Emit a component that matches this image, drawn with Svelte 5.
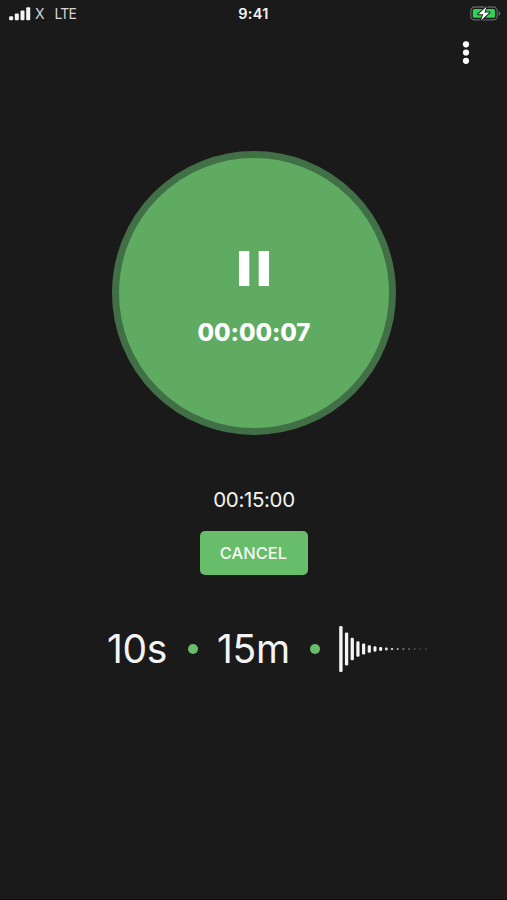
<script lang="ts">
    type WaveBar = {
        height: number,
        width: number,
        opacity: number
    };

    let running = true;
    const elapsed = "00:00:07";
    const total = "00:15:00";
    const interval = "10s";
    const duration = "15m";

    const signal = [4, 6.8, 9.8, 13];

    const heights = [46, 33, 22.5, 15.5, 11, 7.6, 5.4, 4, 2.8, 2.2, 1.8, 1.5, 1.3, 1.2, 1.2, 1.2];
    const widths = [3.4, 3.3, 3.3, 3.2, 3.2, 3.2, 3, 3, 2.8, 2.4, 2, 2, 1.8, 1.6, 1.4, 1.4];
    const opacities = [1, 1, 1, 1, 1, 1, 1, 1, 0.9, 0.8, 0.65, 0.55, 0.45, 0.4, 0.4, 0.4];

    const wave: WaveBar[] = heights.map((height, i) => ({
        height,
        width: widths[i],
        opacity: opacities[i]
    }));

    function toggle() {
        running = !running;
    }
</script>

<div class="screen">
    <header class="status_bar">
        <div class="carrier">
            <svg width="22" height="14" viewBox="0 0 22 14">
                {#each signal as height, i}
                    <rect x={0.1 + i * 5.7} y={13.2 - height} width="4" height={height} rx="1" fill="#f4f4f4" />
                {/each}
            </svg>
            <span class="carrier_name">X</span>
            <span class="network">LTE</span>
        </div>
        <div class="clock">9:41</div>
        <div class="battery">
            <svg width="32" height="18" viewBox="0 0 32 18">
                <rect x="1.8" y="2" width="26.4" height="12.8" rx="3.8" fill="#1a1a1a" stroke="#626262" stroke-width="1.3" />
                <path d="M29.6 6.2c1.3.4 1.8 1.2 1.8 2.3s-.5 1.9-1.8 2.3z" fill="#626262" />
                <rect x="3.8" y="4" width="22.2" height="8.8" rx="1.6" fill="#30d158" />
                <path d="M17.7 1.4 9.3 9.3h5l-2.4 6.2 8.5-8h-5z" fill="#fff" stroke="#1a1a1a" stroke-width="2" stroke-linejoin="round" paint-order="stroke" />
            </svg>
        </div>
    </header>

    <div class="toolbar">
        <button class="menu" aria-label="Menu">
            <svg width="8" height="24" viewBox="0 0 8 24" fill="#fff">
                <circle cx="4" cy="3.3" r="3.1" />
                <circle cx="4" cy="11.5" r="3.1" />
                <circle cx="4" cy="19.8" r="3.1" />
            </svg>
        </button>
    </div>

    <button class="timer" on:click={toggle}>
        <svg width="30" height="35" viewBox="0 0 30 35" fill="#fff">
            {#if running}
                <rect x="0" y="0" width="10.3" height="35" />
                <rect x="19.7" y="0" width="10.3" height="35" />
            {:else}
                <path d="M2 0 30 17.5 2 35z" />
            {/if}
        </svg>
        <span class="elapsed">{elapsed}</span>
    </button>

    <div class="total">{total}</div>
    <button class="cancel">CANCEL</button>

    <div class="summary">
        <span class="value">{interval}</span>
        <span class="dot"></span>
        <span class="value duration">{duration}</span>
        <span class="dot last"></span>
        <svg class="wave" width="90" height="46" viewBox="0 0 90 46">
            {#each wave as bar, i}
                <rect
                    x={1.9 + i * 5.68 - bar.width / 2}
                    y={23 - bar.height / 2}
                    width={bar.width}
                    height={bar.height}
                    rx={Math.min(bar.width, bar.height) / 2.6}
                    fill="#f4f4f4"
                    opacity={bar.opacity}
                />
            {/each}
        </svg>
    </div>
</div>

<style>
    :global(body) {
        background-color: #1a1a1a;
    }

    .screen {
        display: flex;
        flex-direction: column;
        align-items: center;
        box-sizing: border-box;
        height: 900px;
        background-color: #1a1a1a;
        border-bottom: 1px solid #120c10;
        color: #f4f4f4;
        font-family: Inter, "Liberation Sans", sans-serif;
        overflow: hidden;
    }

    button {
        border: none;
        padding: 0;
        color: inherit;
        font-family: inherit;
    }

    .status_bar {
        display: grid;
        grid-template-columns: 1fr auto 1fr;
        align-items: center;
        box-sizing: border-box;
        width: 100%;
        height: 28px;
        padding: 0 6px 0 9px;
    }

    .carrier {
        display: flex;
        align-items: center;
        font-size: 14px;
        line-height: 28px;
        color: #d6d6d6;
    }

    .carrier_name {
        margin-left: 4px;
    }

    .network {
        margin-left: 10px;
        letter-spacing: -0.8px;
    }

    .clock {
        margin-right: 3px;
        font-size: 14.5px;
        font-weight: 600;
        line-height: 28px;
        letter-spacing: 0.3px;
    }

    .battery {
        display: flex;
        justify-content: flex-end;
    }

    .toolbar {
        display: flex;
        justify-content: flex-end;
        width: 100%;
        height: 123px;
    }

    .menu {
        display: flex;
        justify-content: center;
        width: 24px;
        height: 50px;
        margin-right: 29px;
        padding-top: 13px;
        background: none;
    }

    .timer {
        display: flex;
        flex-direction: column;
        align-items: center;
        box-sizing: border-box;
        width: 284px;
        height: 284px;
        margin-left: 1px;
        padding-top: 93px;
        border: 7px solid #427046;
        border-radius: 50%;
        background-color: #5fab62;
        color: #fff;
    }

    .elapsed {
        margin-top: 32px;
        font-size: 24px;
        font-weight: 800;
        line-height: 30px;
        letter-spacing: -0.1px;
    }

    .total {
        margin-top: 52px;
        margin-left: 1px;
        font-size: 20.5px;
        line-height: 26px;
        letter-spacing: -0.35px;
    }

    .cancel {
        width: 108px;
        height: 44px;
        margin-top: 18px;
        border-radius: 5px;
        background-color: #68bd6b;
        color: #f4f8f4;
        font-size: 16.5px;
        font-weight: 500;
    }

    .summary {
        display: flex;
        align-items: center;
        align-self: flex-start;
        height: 60px;
        margin: 44px 0 0 107px;
    }

    .value {
        width: 60px;
        font-size: 39px;
        line-height: 60px;
        letter-spacing: -0.3px;
        white-space: nowrap;
    }

    .duration {
        width: 73px;
        margin-left: 19px;
    }

    .dot {
        width: 10px;
        height: 10px;
        margin-left: 21px;
        border-radius: 50%;
        background-color: #68bd6b;
    }

    .dot.last {
        margin-left: 20px;
    }

    .wave {
        margin-left: 19px;
    }
</style>
